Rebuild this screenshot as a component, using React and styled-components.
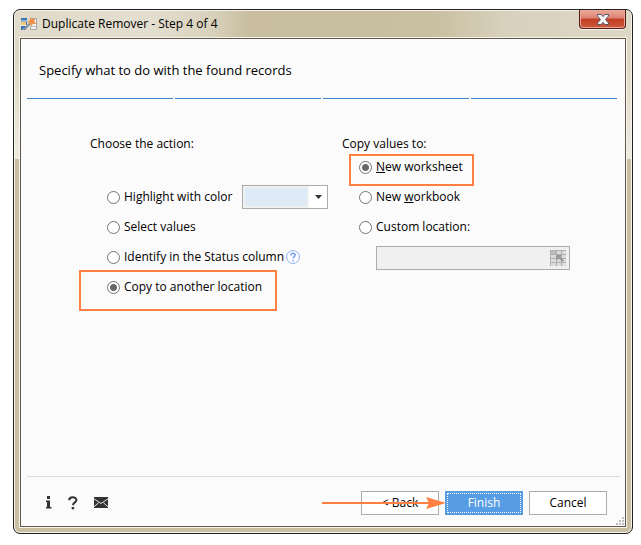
import React, { useState } from "react";
import styled, { createGlobalStyle, css } from "styled-components";

const ORANGE = "#ff8040";

const GlobalStyle = createGlobalStyle`
  *, *::before, *::after { box-sizing: border-box; }
  body { margin: 0; background: #fff; }
  body, button, input, select {
    font-family: "Open Sans", "Noto Sans", sans-serif;
    font-size: 12px;
    line-height: 16px;
    color: #000;
  }
`;

const Page = styled.main`
  display: flex;
  min-height: 100vh;
  padding: 9px 8px 11px 13px;
`;

const DialogWindow = styled.section`
  flex: 1;
  display: flex;
  flex-direction: column;
  padding: 0 6px 6px;
  border: 1px solid #222;
  border-radius: 7px;
  box-shadow: inset 0 0 0 1px #f6f3ea;
  background:
    linear-gradient(90deg, #dfdac9 0, #e3decf 22%, #d8d1bc 32%, #c8be9f 38%, #c9bfa1 68%, #d8d1bd 80%, #ddd7c6 100%) 0 0 / 100% 28px no-repeat,
    linear-gradient(180deg, #ddd7c6 0, #ddd7c6 50px, #eeebe1 149px, #c9bfa2 149px, #c9bfa2 100%);
`;

const TitleBar = styled.header`
  display: flex;
  align-items: center;
  gap: 5px;
  height: 28px;
  padding-left: 1px;
`;

const Title = styled.h1`
  flex: 1;
  margin: 0;
  font-size: 12px;
  font-weight: 400;
`;

const CloseButton = styled.button`
  align-self: flex-start;
  display: grid;
  place-items: center;
  width: 47px;
  height: 19px;
  padding: 0;
  border: 1px solid #551b16;
  border-top: 0;
  border-radius: 0 0 4px 4px;
  box-shadow: inset 0 0 0 1px #eda797, 0 1px 0 #f6f3ea;
  background: linear-gradient(#eba99b 0, #dd8372 45%, #c23d22 50%, #cf5a3c 100%);
`;

const Client = styled.div`
  flex: 1;
  display: flex;
  flex-direction: column;
  border: 1px solid #5f584a;
  outline: 1px solid #f6f3ea;
  background: #fbfbfb;
`;

const Heading = styled.h2`
  margin: 22px 18px 19px;
  font-size: 13px;
  line-height: 18px;
  font-weight: 400;
`;

const Steps = styled.div`
  display: grid;
  grid-template-columns: repeat(4, 1fr);
  gap: 2px;
  margin: 0 8px 0 6px;
`;

const Step = styled.span`
  height: 1px;
  background: #3f86cb;
`;

const Content = styled.div`
  flex: 1;
  display: grid;
  grid-template-columns: 252px 1fr;
  align-items: start;
  padding: 37px 54px 24px 69px;
`;

const Group = styled.fieldset`
  min-width: 0;
  margin: 0;
  padding: 0;
  border: 0;
`;

const Legend = styled.legend`
  padding: 0;
  height: 16px;
`;

const Options = styled.div`
  padding: ${({ $spaced }) => ($spaced ? "30px" : "0")} 0 0 17px;
`;

const OptionRow = styled.div`
  position: relative;
  display: flex;
  align-items: center;
  height: 30px;
`;

const OptionLabel = styled.label`
  display: flex;
  align-items: center;
  gap: 4px;
  white-space: nowrap;
`;

const Radio = styled.input.attrs({ type: "radio" })`
  appearance: none;
  width: 13px;
  height: 13px;
  margin: 0;
  border: 1px solid #747474;
  border-radius: 50%;
  background: #fff;
  &:checked {
    background: radial-gradient(circle, #686868 0 3px, #fff 4px);
  }
`;

const Highlight = styled.span`
  position: absolute;
  border: 2px solid ${ORANGE};
  pointer-events: none;
  ${({ $wide }) =>
    $wide
      ? css`left: -28px; top: -2px; width: 198px; height: 41px;`
      : css`left: -10px; top: 2px; width: 125px; height: 32px;`}
`;

const ColorField = styled.div`
  position: relative;
  margin-left: auto;
  margin-right: 14px;
`;

const ColorSelect = styled.select`
  appearance: none;
  display: block;
  width: 86px;
  height: 24px;
  padding: 0;
  border: 1px solid #acacac;
  border-radius: 0;
  color: transparent;
  background:
    linear-gradient(#deeaf6, #deeaf6) 2px 2px / 62px 18px no-repeat,
    linear-gradient(#f0f0f0, #f0f0f0) 0 0 / 66px 100% no-repeat,
    #fff;
`;

const SelectArrow = styled.svg`
  position: absolute;
  right: 6px;
  top: 10px;
  pointer-events: none;
`;

const HelpButton = styled.button`
  display: grid;
  margin-left: 2px;
  padding: 0;
  border: 0;
  background: none;
`;

const LocationField = styled.div`
  display: flex;
  align-items: center;
  width: 194px;
  height: 24px;
  margin: 4px 0 0 17px;
  padding-right: 3px;
  border: 1px solid #acacac;
  background: #f0f0f0;
`;

const LocationInput = styled.input`
  flex: 1;
  min-width: 0;
  height: 100%;
  padding: 0 4px;
  border: 0;
  background: transparent;
`;

const IconButton = styled.button`
  display: grid;
  place-items: center;
  padding: 0;
  border: 0;
  background: none;
`;

const Footer = styled.footer`
  display: flex;
  align-items: center;
  justify-content: space-between;
  height: 50px;
  margin: 0 5px 0 6px;
  padding: 2px 13px 0 19px;
  border-top: 1px solid #dcdcdc;
`;

const Tools = styled.div`
  display: grid;
  grid-template-columns: 6px 10px 14px;
  column-gap: 16px;
`;

const Actions = styled.div`
  position: relative;
  display: flex;
  gap: 6px;
`;

const ActionButton = styled.button`
  width: 78px;
  height: 24px;
  padding: 0;
  border: 1px solid ${({ $primary }) => ($primary ? "#569de5" : "#acacac")};
  background: ${({ $primary }) => ($primary ? "#569de5" : "#fff")};
  color: ${({ $primary }) => ($primary ? "#fff" : "#000")};
  ${({ $primary }) =>
    $primary && css`outline: 1px dotted #fff; outline-offset: -3px;`}
`;

const Arrow = styled.svg`
  position: absolute;
  left: -39px;
  top: 6px;
  pointer-events: none;
`;

const Grip = styled.svg`
  position: absolute;
  right: 1px;
  bottom: 1px;
`;

const FooterArea = styled.div`
  position: relative;
`;

const AppIcon = () => (
  <svg width="16" height="14" viewBox="0 0 16 14" aria-hidden="true">
    <path d="M0 1h6v12H0z" fill="#3d76b4" />
    <path d="M0 5h5v3H0z" fill="#f1c875" />
    <path d="M0 4h6M0 8.500h6" stroke="#e9eef3" />
    <path d="M9.500 1.500h6v11h-6z" fill="#f2f2f0" stroke="#a4a6a8" />
    <path d="M10 9.500h5" stroke="#b9bbbd" />
    <path d="M3 13.500 11 5.500" stroke="#f3f3f3" strokeWidth="3" />
    <path d="M3 13 9 6.500" stroke="#858b91" strokeWidth="2" />
    <path d="m9 0 2 2.200L14.500 1l-1.300 3.200L15.500 7l-3.500-.3L10 9.500 9.300 6.200 6 4.800l3.200-1.600z" fill="#ed9144" />
  </svg>
);

const CloseIcon = () => (
  <svg width="12" height="11" viewBox="0 0 12 11" aria-hidden="true">
    <path d="M.5.500h3.700L6 2.600 7.800.500h3.700v1.500L8.500 5.500l3 3.500v1.500H7.800L6 8.400 4.200 10.500H.500V9l3-3.500-3-3.500z" fill="#f4f4f4" stroke="#565866" />
  </svg>
);

const HelpIcon = () => (
  <svg width="14" height="14" viewBox="0 0 14 14" aria-hidden="true">
    <circle cx="7" cy="7" r="6.400" fill="#fff" stroke="#8aaef0" />
    <path d="M4.900 5.500C4.900 2.700 9.300 2.800 9.200 5.300 9.200 6.700 7.200 6.700 7.100 8.400M7.100 9.700v1.500" fill="none" stroke="#7da3ee" strokeWidth="1.600" />
  </svg>
);

const PickerIcon = () => (
  <svg width="16" height="16" viewBox="0 0 16 16" aria-hidden="true">
    <path d="M0 0h16v16H0z" fill="#dcdcdc" />
    <path d="M0 0h6v4H0z" fill="#bdbdbd" />
    <path d="M0 .5h16M0 4.500h16M0 8.500h16M0 12.500h16M.5 0v16M6.500 0v16M11.500 0v16" stroke="#b0b0b0" />
    <path d="M6 5h6l-1.500 1.500L14 10.500 12.500 12 8.500 8.500 6 11z" fill="#999" />
  </svg>
);

const InfoIcon = () => (
  <svg width="6" height="13" viewBox="0 0 6 13" aria-hidden="true">
    <path d="M1 0h3v3H1zM0 4.500h4v6.500h1.500v1.500H0V11h1V6H0z" fill="#333" />
  </svg>
);

const QuestionIcon = () => (
  <svg width="10" height="14" viewBox="0 0 10 14" aria-hidden="true">
    <path d="M1.200 4.300C1.200.1 8.500.2 8.400 4.200 8.300 6.500 5 6.300 5 9.300" fill="none" stroke="#333" strokeWidth="2" />
    <path d="M3.700 11h2.500v2.300H3.700z" fill="#333" />
  </svg>
);

const MailIcon = () => (
  <svg width="14" height="11" viewBox="0 0 14 11" aria-hidden="true">
    <path d="M0 0h14v11H0z" fill="#333" />
    <path d="M0 1.800 7 6.500l7-4.700M0 9.800l4.500-4M14 9.800l-4.500-4" fill="none" stroke="#e4e4e4" />
  </svg>
);

const ACTIONS = [
  { id: "highlight", text: "Highlight with color" },
  { id: "select", text: "Select values" },
  { id: "status", text: "Identify in the Status column" },
  { id: "copy", text: "Copy to another location" },
];

const TARGETS = [
  { id: "worksheet", text: <span><u>N</u>ew worksheet</span> },
  { id: "workbook", text: <span>New <u>w</u>orkbook</span> },
  { id: "custom", text: "Custom location:" },
];

function Option({ option, name, value, onChange, children }) {
  return (
    <OptionRow>
      <OptionLabel>
        <Radio name={name} value={option.id} checked={value === option.id} onChange={() => onChange(option.id)} />
        {option.text}
      </OptionLabel>
      {children}
    </OptionRow>
  );
}

export default function App() {
  const [action, setAction] = useState("copy");
  const [target, setTarget] = useState("worksheet");
  return (
    <>
      <GlobalStyle />
      <Page>
        <DialogWindow role="dialog" aria-labelledby="dialog-title">
          <TitleBar>
            <AppIcon />
            <Title id="dialog-title">Duplicate Remover - Step 4 of 4</Title>
            <CloseButton type="button" aria-label="Close"><CloseIcon /></CloseButton>
          </TitleBar>
          <Client>
            <Heading>Specify what to do with the found records</Heading>
            <Steps aria-hidden="true"><Step /><Step /><Step /><Step /></Steps>
            <Content>
              <Group>
                <Legend>Choose the action:</Legend>
                <Options $spaced>
                  {ACTIONS.map((option) => (
                    <Option key={option.id} option={option} name="action" value={action} onChange={setAction}>
                      {option.id === "highlight" && (
                        <ColorField>
                          <ColorSelect aria-label="Highlight color" defaultValue="blue">
                            <option value="blue" aria-label="Light blue" />
                          </ColorSelect>
                          <SelectArrow width="7" height="4" viewBox="0 0 7 4" aria-hidden="true">
                            <path d="M0 0h7L3.500 4z" fill="#333" />
                          </SelectArrow>
                        </ColorField>
                      )}
                      {option.id === "status" && (
                        <HelpButton type="button" aria-label="Help"><HelpIcon /></HelpButton>
                      )}
                      {option.id === "copy" && <Highlight $wide />}
                    </Option>
                  ))}
                </Options>
              </Group>
              <Group>
                <Legend>Copy values to:</Legend>
                <Options>
                  {TARGETS.map((option) => (
                    <Option key={option.id} option={option} name="target" value={target} onChange={setTarget}>
                      {option.id === "worksheet" && <Highlight />}
                    </Option>
                  ))}
                  <LocationField>
                    <LocationInput aria-label="Custom location" disabled />
                    <IconButton type="button" aria-label="Select range" disabled><PickerIcon /></IconButton>
                  </LocationField>
                </Options>
              </Group>
            </Content>
            <FooterArea>
              <Footer>
                <Tools>
                  <IconButton type="button" aria-label="About"><InfoIcon /></IconButton>
                  <IconButton type="button" aria-label="Help"><QuestionIcon /></IconButton>
                  <IconButton type="button" aria-label="Contact us"><MailIcon /></IconButton>
                </Tools>
                <Actions>
                  <ActionButton type="button">&lt; Back</ActionButton>
                  <ActionButton type="button" $primary>Finish</ActionButton>
                  <ActionButton type="button">Cancel</ActionButton>
                  <Arrow width="124" height="12" viewBox="0 0 124 12" aria-hidden="true">
                    <path d="M0 6h108" stroke={ORANGE} strokeWidth="2" />
                    <path d="M104 0l20 6-20 6 3-6z" fill={ORANGE} />
                  </Arrow>
                </Actions>
              </Footer>
              <Grip width="8" height="8" viewBox="0 0 8 8" aria-hidden="true">
                <path d="M6 0h2v2H6zM3 3h2v2H3zM6 3h2v2H6zM0 6h2v2H0zM3 6h2v2H3zM6 6h2v2H6z" fill="#bdbdbd" />
              </Grip>
            </FooterArea>
          </Client>
        </DialogWindow>
      </Page>
    </>
  );
}
